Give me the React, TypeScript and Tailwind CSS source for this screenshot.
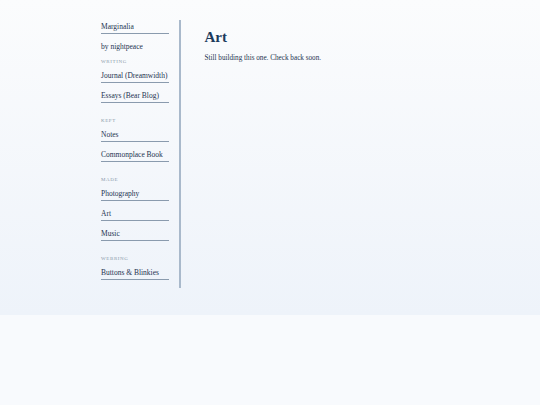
import React from "react";

type Section = { label: string; links: string[] };

const SECTIONS: Section[] = [
  { label: "Writing", links: ["Journal (Dreamwidth)", "Essays (Bear Blog)"] },
  { label: "Kept", links: ["Notes", "Commonplace Book"] },
  { label: "Made", links: ["Photography", "Art", "Music"] },
  { label: "Webring", links: ["Buttons & Blinkies"] },
];

const serif = "font-['Liberation_Serif',Georgia,serif]";

function NavLink({ children }: { children: React.ReactNode }) {
  return (
    <a
      href="#"
      className="block h-[14px] border-b border-[#8a9bae] text-[7.5px] leading-[13px] text-[#1d3350]"
    >
      {children}
    </a>
  );
}

export default function App() {
  return (
    <div className={`min-h-[405px] bg-[#f8fafd] ${serif}`}>
      <div className="h-[315px] bg-gradient-to-b from-[#fbfcfd] to-[#eef3fa] pt-[20px] pl-[101px]">
        <div className="flex">
          {/* sidebar */}
          <nav className="w-[68px] pb-[8px]">
            <NavLink>Marginalia</NavLink>
            <p className="mt-[7px] text-[7.5px] leading-[12px] text-[#1d3350]">by nightpeace</p>
            {SECTIONS.map((s, i) => (
              <div key={s.label} className={i === 0 ? "mt-[5px]" : "mt-[14px]"}>
                <div className="text-[5px] leading-[8px] tracking-[0.12em] uppercase text-[#8b9aab]">
                  {s.label}
                </div>
                <div className="mt-[3px] flex flex-col gap-[6px]">
                  {s.links.map((l) => (
                    <NavLink key={l}>{l}</NavLink>
                  ))}
                </div>
              </div>
            ))}
          </nav>
          <div className="ml-[10px] w-[1.5px] bg-[#a9b9cb]" />
          {/* main */}
          <main className="pl-[24px] pt-[8px]">
            <h1 className="text-[15px] font-bold leading-[18px] text-[#1c3a5c]">Art</h1>
            <p className="mt-[7px] text-[7.2px] leading-[10px] text-[#1d3350]">
              Still building this one. Check back soon.
            </p>
          </main>
        </div>
      </div>
    </div>
  );
}
